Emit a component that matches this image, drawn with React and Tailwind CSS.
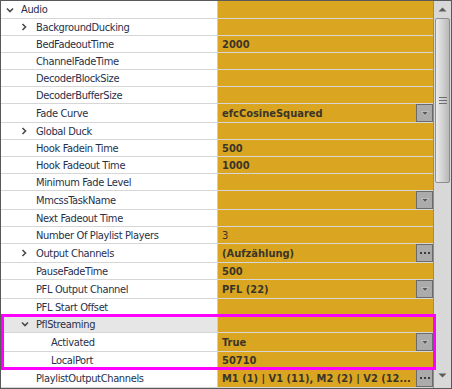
import React from 'react';

const rows = [
  { name: 'Audio', level: 0, expand: 'open', first: true },
  { name: 'BackgroundDucking', level: 1, expand: 'closed' },
  { name: 'BedFadeoutTime', level: 1, value: '2000', bold: true },
  { name: 'ChannelFadeTime', level: 1 },
  { name: 'DecoderBlockSize', level: 1 },
  { name: 'DecoderBufferSize', level: 1 },
  { name: 'Fade Curve', level: 1, value: 'efcCosineSquared', bold: true, btn: 'drop' },
  { name: 'Global Duck', level: 1, expand: 'closed' },
  { name: 'Hook Fadein Time', level: 1, value: '500', bold: true },
  { name: 'Hook Fadeout Time', level: 1, value: '1000', bold: true },
  { name: 'Minimum Fade Level', level: 1 },
  { name: 'MmcssTaskName', level: 1, btn: 'drop' },
  { name: 'Next Fadeout Time', level: 1 },
  { name: 'Number Of Playlist Players', level: 1, value: '3' },
  { name: 'Output Channels', level: 1, expand: 'closed', value: '(Aufzählung)', bold: true, btn: 'dots' },
  { name: 'PauseFadeTime', level: 1, value: '500', bold: true },
  { name: 'PFL Output Channel', level: 1, value: 'PFL (22)', bold: true, btn: 'drop' },
  { name: 'PFL Start Offset', level: 1 },
  { name: 'PflStreaming', level: 1, expand: 'open', category: true },
  { name: 'Activated', level: 2, value: 'True', bold: true, btn: 'drop' },
  { name: 'LocalPort', level: 2, value: '50710', bold: true },
  { name: 'PlaylistOutputChannels', level: 1, value: 'M1 (1) | V1 (11), M2 (2) | V2 (12...', bold: true, btn: 'dots' },
];

function Chevron({ open }) {
  return open ? (
    <svg width="8" height="6" viewBox="0 0 8 6" className="shrink-0">
      <polyline points="1,1.5 4,4.5 7,1.5" fill="none" stroke="#4a4a4a" strokeWidth="1.6" />
    </svg>
  ) : (
    <svg width="6" height="8" viewBox="0 0 6 8" className="shrink-0">
      <polyline points="1.5,1 4.5,4 1.5,7" fill="none" stroke="#4a4a4a" strokeWidth="1.6" />
    </svg>
  );
}

function RowButton({ kind }) {
  return (
    <div className="w-[17px] h-full shrink-0 border border-[#6b6b6b] bg-[#ababab] flex items-center justify-center">
      {kind === 'drop' ? (
        <svg width="8" height="5" viewBox="0 0 8 5">
          <polygon points="0.5,0.5 7.5,0.5 4,4.5" fill="#5a5a5a" stroke="#e2e2e2" strokeWidth="0.6" />
        </svg>
      ) : (
        <div className="flex gap-[2px]">
          <span className="w-[2px] h-[2px] bg-[#3c3c3c]" />
          <span className="w-[2px] h-[2px] bg-[#3c3c3c]" />
          <span className="w-[2px] h-[2px] bg-[#3c3c3c]" />
        </div>
      )}
    </div>
  );
}

function Row({ row }) {
  const height = row.first ? 'h-[18px]' : row.btn ? 'h-[19px]' : 'h-[17px]';
  const indent = row.level === 0 ? 'pl-[5px]' : row.level === 1 ? 'pl-[20px]' : 'pl-[35px]';
  return (
    <div className={`flex ${height} border-b border-[#d6d6d6]`}>
      <div className={`w-[217px] shrink-0 flex items-center border-r border-[#cdcdcd] ${indent} ${row.category ? 'bg-[#e6e6e6]' : 'bg-white'}`}>
        <div className="w-[15px] shrink-0 flex items-center">
          {row.expand && <Chevron open={row.expand === 'open'} />}
        </div>
        <span className="text-[#27304a] whitespace-nowrap tracking-[-0.35px]">{row.name}</span>
      </div>
      <div className="flex-1 min-w-0 flex items-center bg-[#daa520]">
        <span className={`flex-1 min-w-0 pl-[4px] truncate text-[#3a3528] ${row.bold ? 'font-bold' : ''}`}>
          {row.value}
        </span>
        {row.btn && <RowButton kind={row.btn} />}
      </div>
    </div>
  );
}

function Scrollbar() {
  return (
    <div className="w-[18px] shrink-0 border-l border-[#8c8c8c] bg-[#d8d8d8] flex flex-col items-center">
      <div className="h-[17px] w-full flex items-center justify-center">
        <svg width="9" height="5" viewBox="0 0 9 5">
          <polygon points="0.5,4.5 8.5,4.5 4.5,0.5" fill="#5c5c5c" />
        </svg>
      </div>
      <div className="w-[15px] h-[165px] rounded-[2px] border border-[#8e8e8e] bg-gradient-to-r from-[#ececec] via-[#d2d2d2] to-[#b8b8b8] flex flex-col items-center justify-center gap-[2px]">
        <span className="w-[8px] h-px bg-[#6e6e6e]" />
        <span className="w-[8px] h-px bg-[#6e6e6e]" />
        <span className="w-[8px] h-px bg-[#6e6e6e]" />
      </div>
      <div className="flex-1" />
      <div className="h-[17px] w-full flex items-center justify-center mb-[4px]">
        <svg width="9" height="5" viewBox="0 0 9 5">
          <polygon points="0.5,0.5 8.5,0.5 4.5,4.5" fill="#5c5c5c" />
        </svg>
      </div>
    </div>
  );
}

export default function App() {
  return (
    <div
      className="relative w-[452px] h-[389px] overflow-hidden border border-[#595959] bg-white flex text-[11px] leading-none"
      style={{ fontFamily: '"DejaVu Sans Condensed", "DejaVu Sans", sans-serif' }}
    >
      <div className="w-[432px] shrink-0 flex flex-col">
        {rows.map((row) => (
          <Row key={row.name} row={row} />
        ))}
      </div>
      <Scrollbar />
      {/* highlight box */}
      <div className="absolute left-0 top-[313px] w-[435px] h-[56px] border-[3px] border-[#ff00ff] pointer-events-none" />
    </div>
  );
}
